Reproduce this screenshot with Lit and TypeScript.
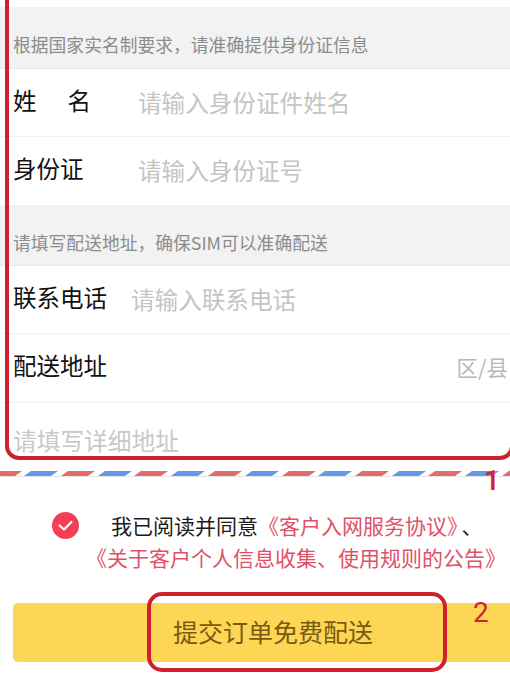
import { LitElement, html, css, svg } from "lit";
import { customElement } from "lit/decorators.js";

function stripe(x: number, fill: string) {
  return svg`<path d="M${x} 5 L${x + 7} 0 H${x + 34} L${x + 27} 5 Z" fill="${fill}"></path>`;
}

@customElement("app-root")
export class AppRoot extends LitElement {
  static styles = css`
    :host {
      display: block;
      position: relative;
      width: 510px;
      height: 680px;
      overflow: hidden;
      background: #fff;
      font-family: "Noto Sans CJK SC", "Noto Sans", sans-serif;
    }
    .form { padding-top: 7px; height: 471px; box-sizing: border-box; overflow: hidden; }
    .section {
      background: #f2f2f2;
      height: 62px;
      box-sizing: border-box;
      padding: 24px 0 0 13px;
      font-size: 17.8px;
      line-height: 26px;
      color: #8c8c8c;
      border-bottom: 1px solid #e8e8e8;
      white-space: nowrap;
    }
    .section.second { height: 60px; padding-top: 23px; }
    .row {
      display: flex;
      align-items: center;
      height: 68px;
      box-sizing: border-box;
      padding-left: 13px;
      border-bottom: 1px solid #f1f1f1;
      white-space: nowrap;
    }
    .row.tall { height: 69px; }
    .label { font-size: 23.5px; color: #111; width: 125px; flex: none; line-height: 32px; margin-bottom: 6px; }
    .label.wide { width: 118px; }
    .label.spaced { display: flex; justify-content: space-between; width: 78px; margin-right: 47px; }
    .ph { font-size: 23.6px; color: #c4c4c4; line-height: 32px; margin-bottom: 2px; }
    .end { margin-left: auto; font-size: 21.5px; color: #b8b8b8; margin-right: 2px; margin-bottom: 4px; }
    .address { padding: 18px 0 0 13px; font-size: 23.7px; color: #c8c8c8; line-height: 38px; white-space: nowrap; }
    .air { height: 6px; border-bottom: 1px solid #e4e4e4; box-sizing: border-box; }
    .air svg { display: block; }
    .agree {
      height: 126px;
      box-sizing: border-box;
      padding-top: 32px;
      font-size: 21px;
      line-height: 32px;
    }
    .line1 { display: flex; align-items: center; white-space: nowrap; padding-left: 52px; color: #1a1a1a; }
    .check { width: 27px; height: 27px; flex: none; margin-right: 32px; }
    .link { color: #e0506a; margin-right: 4px; }
    .line2 { color: #e0506a; white-space: nowrap; padding-left: 86px; }
    .btn {
      margin-left: 13px;
      height: 59px;
      box-sizing: border-box;
      padding: 0 0 3px 160px;
      background: #fdd655;
      border-radius: 5px 0 0 5px;
      display: flex;
      align-items: center;
      font-size: 25px;
      color: #7a5a10;
      white-space: nowrap;
    }
    .mark { position: absolute; border: 4px solid #d0202e; box-sizing: border-box; }
    .mark.one { left: 5px; top: -30px; width: 509px; height: 490px; border-radius: 14px; }
    .mark.two { left: 147px; top: 592px; width: 300px; height: 80px; border-radius: 15px; }
    .num { position: absolute; color: #d8202c; font-family: Roboto, "Liberation Sans", sans-serif; font-weight: 500; font-size: 28px; line-height: 30px; }
    .num.n1 { left: 484px; top: 466px; }
    .num.n2 { left: 473px; top: 598px; font-weight: 400; }
  `;

  render() {
    const reds = [-12, 61, 134, 208, 282, 355, 428, 502];
    const blues = [24, 98, 171, 245, 318, 392, 465];
    return html`
      <div class="form">
        <div class="section">根据国家实名制要求，请准确提供身份证信息</div>
        <div class="row"><span class="label spaced"><span>姓</span><span>名</span></span><span class="ph">请输入身份证件姓名</span></div>
        <div class="row tall"><span class="label">身份证</span><span class="ph">请输入身份证号</span></div>
        <div class="section second">请填写配送地址，确保SIM可以准确配送</div>
        <div class="row"><span class="label wide">联系电话</span><span class="ph">请输入联系电话</span></div>
        <div class="row tall"><span class="label wide">配送地址</span><span class="end">区/县</span></div>
        <div class="address">请填写详细地址</div>
      </div>
      <div class="air">
        <svg width="510" height="5" viewBox="0 0 510 5" xmlns="http://www.w3.org/2000/svg">
          ${reds.map((x) => stripe(x, "#e26c6c"))}
          ${blues.map((x) => stripe(x, "#5f9be6"))}
        </svg>
      </div>
      <div class="agree">
        <div class="line1">
          <svg class="check" viewBox="0 0 27 27" xmlns="http://www.w3.org/2000/svg">
            <circle cx="13.5" cy="13.5" r="13.5" fill="#f23f57"></circle>
            <path d="M7.5 13.5 L12 17.5 L19.5 10" fill="none" stroke="#fff" stroke-width="2.2" stroke-linecap="round" stroke-linejoin="round"></path>
          </svg>
          <span>我已阅读并同意<span class="link">《客户入网服务协议》</span>、</span>
        </div>
        <div class="line2">《关于客户个人信息收集、使用规则的公告》</div>
      </div>
      <div class="btn">提交订单免费配送</div>
      <div class="mark one"></div>
      <div class="mark two"></div>
      <div class="num n1">1</div>
      <div class="num n2">2</div>
    `;
  }
}
